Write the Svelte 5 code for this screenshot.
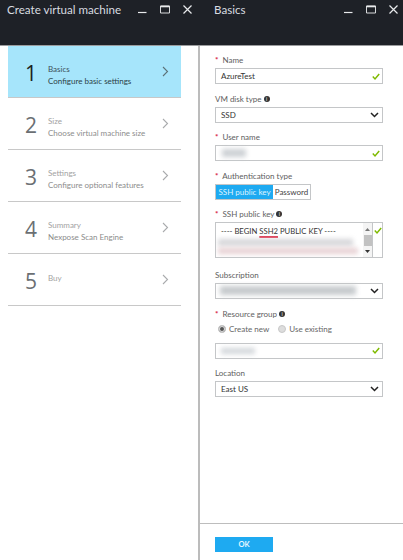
<script>
  const steps = [
    { n: 1, title: 'Basics', sub: 'Configure basic settings', active: true },
    { n: 2, title: 'Size', sub: 'Choose virtual machine size' },
    { n: 3, title: 'Settings', sub: 'Configure optional features' },
    { n: 4, title: 'Summary', sub: 'Nexpose Scan Engine' },
    { n: 5, title: 'Buy', sub: '' }
  ];
</script>

{#snippet winButtons()}
  <div class="winbtns">
    <svg width="9" height="9" viewBox="0 0 9 9"><path d="M0 7.5h8.5" stroke="#e8eaec" stroke-width="1.2" /></svg>
    <svg width="10" height="9" viewBox="0 0 10 9"><path d="M.5 1h9v7H.5z" fill="none" stroke="#d8dadc" stroke-width="1" /><path d="M.5 1.5h9" stroke="#e8eaec" stroke-width="1.6" /></svg>
    <svg width="9" height="9" viewBox="0 0 9 9"><path d="M.5 .5l8 8M8.500 .5l-8 8" stroke="#e8eaec" stroke-width="1.2" /></svg>
  </div>
{/snippet}

{#snippet check()}
  <svg class="check" width="8" height="7" viewBox="0 0 8 7"><path d="M.8 3.6l2.2 2.3L7.2 1" fill="none" stroke="#7fba00" stroke-width="1.5" /></svg>
{/snippet}

{#snippet chevron()}
  <svg class="chev" width="9" height="6" viewBox="0 0 9 6"><path d="M1 1l3.5 3.5L8 1" fill="none" stroke="#222" stroke-width="1.5" /></svg>
{/snippet}

{#snippet info()}
  <span class="info">i</span>
{/snippet}

<div class="app">
  <section class="blade left">
    <header>
      <h1>Create virtual machine</h1>
      {@render winButtons()}
    </header>
    <div class="leftbody">
      <ol class="steps">
        {#each steps as s}
          <li class:active={s.active}>
            <span class="num">{s.n}</span>
            <div class="txt" class:single={!s.sub}>
              <span class="ttl">{s.title}</span>
              {#if s.sub}<span>{s.sub}</span>{/if}
            </div>
            <svg class="arrow" width="7" height="11" viewBox="0 0 7 11"><path d="M1 1l4.500 4.500L1 10" fill="none" stroke="currentColor" stroke-width="1.1" /></svg>
          </li>
        {/each}
      </ol>
    </div>
  </section>

  <section class="blade right">
    <header>
      <h1>Basics</h1>
      {@render winButtons()}
    </header>
    <form class="form">
      <div class="field">
        <div class="label"><b>*</b> Name</div>
        <div class="input"><span>AzureTest</span>{@render check()}</div>
      </div>
      <div class="field">
        <div class="label">VM disk type {@render info()}</div>
        <div class="input"><span>SSD</span>{@render chevron()}</div>
      </div>
      <div class="field">
        <div class="label"><b>*</b> User name</div>
        <div class="input"><i class="blur short"></i>{@render check()}</div>
      </div>
      <div class="field">
        <div class="label"><b>*</b> Authentication type</div>
        <div class="toggle"><span class="on">SSH public key</span><span class="off">Password</span></div>
      </div>
      <div class="field">
        <div class="label"><b>*</b> SSH public key {@render info()}</div>
        <div class="area">
          <div class="areatext">
            <div class="keyline">---- BEGIN <u>SSH2</u> PUBLIC KEY ----</div>
            <i class="blur l1"></i>
            <i class="blur l2"></i>
          </div>
          <div class="scroll">
            <svg width="5" height="3" viewBox="0 0 5 3"><path d="M0 3l2.500-3L5 3z" fill="#777" /></svg>
            <i></i>
            <svg width="5" height="3" viewBox="0 0 5 3"><path d="M0 0l2.500 3L5 0z" fill="#333" /></svg>
          </div>
          <div class="areacheck">{@render check()}</div>
        </div>
      </div>
      <div class="field">
        <div class="label">Subscription</div>
        <div class="input"><i class="blur wide"></i>{@render chevron()}</div>
      </div>
      <div class="field">
        <div class="label"><b>*</b> Resource group {@render info()}</div>
        <div class="radios">
          <span class="radio"><i class="dot sel"></i>Create new</span>
          <span class="radio"><i class="dot"></i>Use existing</span>
        </div>
        <div class="input rg"><i class="blur mid"></i>{@render check()}</div>
      </div>
      <div class="field">
        <div class="label">Location</div>
        <div class="input"><span>East US</span>{@render chevron()}</div>
      </div>
    </form>
    <footer>
      <button type="button">OK</button>
    </footer>
  </section>
</div>

<style>
  :global(body) { margin: 0; background: #fff; }
  .app {
    width: 403px;
    height: 560px;
    display: flex;
    overflow: hidden;
    font-family: Lato, "Open Sans", "Liberation Sans", sans-serif;
    font-size: 8px;
    color: #444;
  }
  .blade { display: flex; flex-direction: column; height: 100%; background: #fff; }
  .left { width: 200px; flex: none; }
  .right { flex: 1; min-width: 0; }
  header {
    height: 46px;
    box-sizing: border-box;
    flex: none;
    background: #1e2127;
    border-bottom: 1px solid #9b9c9e;
    display: flex;
    align-items: flex-start;
    justify-content: space-between;
    padding: 0 8px 0 7px;
    color: #e8eaec;
  }
  .right header { padding-left: 14px; padding-right: 5px; }
  h1 { margin: 0; font-size: 11.6px; font-weight: 400; line-height: 20px; white-space: nowrap; color: #d8dce0; }
  .winbtns { display: flex; gap: 13px; align-items: center; height: 19px; }
  .leftbody { flex: 1; border-right: 2px solid #bcbcbc; }
  .steps { list-style: none; margin: 0 17px 0 8px; padding: 0; }
  .steps li {
    height: 52px;
    box-sizing: border-box;
    border-bottom: 1px solid #c8c8c8;
    display: flex;
    align-items: center;
    color: #8c8c8c;
    padding-left: 17px;
  }
  .steps li.active { background: #a6e5fb; color: #2b3f46; }
  .num { font-family: "Open Sans", sans-serif; font-size: 21px; width: 23px; flex: none; color: #6b6f73; font-weight: 400; margin-top: 3px; }
  .active .num { color: #1b1f22; }
  .txt { flex: 1; display: flex; flex-direction: column; gap: 2px; line-height: 10px; margin-top: 7px; }
  .txt.single { margin-top: -4px; }
  .ttl { color: #a2a2a2; }
  .active .ttl { color: #3d5058; }
  .arrow { margin-right: 12px; color: #a9abad; }
  .active .arrow { color: #5c7278; }
  .form { flex: 1; padding: 8px 20px 0 15px; display: flex; flex-direction: column; gap: 8.6px; }
  .field { display: flex; flex-direction: column; }
  .label { line-height: 12px; height: 14px; color: #5e5e5e; white-space: nowrap; }
  .label b { color: #d6213f; font-weight: 700; margin-right: 2px; }
  .info {
    display: inline-block; width: 6px; height: 6px; border-radius: 50%;
    background: #333; color: #fff; font-size: 5px; line-height: 6px; text-align: center;
    font-style: normal; vertical-align: 1px;
  }
  .input {
    height: 16px;
    box-sizing: border-box;
    border: 1px solid #c4c6c8;
    display: flex;
    align-items: center;
    justify-content: space-between;
    padding: 0 1px 0 5px;
    color: #333;
    background: #fff;
  }
  .check { margin-right: 1px; flex: none; }
  .chev { margin-right: 2px; flex: none; }
  .blur { display: block; background: #c4c8cc; filter: blur(2.5px); }
  .short { width: 24px; height: 8px; margin-left: 1px; background: #ccd0d4; }
  .wide { width: 136px; height: 9px; background: #c6cacd; margin-left: -1px; }
  .mid { width: 34px; height: 6px; background: #d2d6da; }
  .toggle { display: flex; width: 96px; height: 16px; box-sizing: border-box; border: 1px solid #c4c6c8; line-height: 14px; }
  .toggle span { white-space: nowrap; text-align: center; }
  .toggle .on { width: 57px; flex: none; background: #1eaaf1; color: #dff4ff; }
  .toggle .off { flex: 1; color: #444; }
  .area {
    height: 36px;
    margin-bottom: 2px;
    box-sizing: border-box;
    border: 1px solid #c4c6c8;
    display: flex;
    overflow: hidden;
  }
  .areatext { flex: 1; padding: 3px 5px; overflow: hidden; min-width: 0; }
  .keyline { white-space: nowrap; line-height: 10px; color: #333; font-size: 7.7px; }
  .keyline u { text-decoration: underline #e0304a 1.5px; text-underline-offset: 2px; }
  .l1 { width: 135px; height: 7px; margin: 3px 0 0 -3px; background: #d6d6d9; }
  .l2 { width: 140px; height: 6px; margin: 2px 0 0 -3px; background: #e6cfd2; }
  .scroll { width: 9px; flex: none; display: flex; flex-direction: column; align-items: center; justify-content: space-between; padding: 5px 0 4px; box-sizing: border-box; background: #f4f4f4; }
  .scroll i { display: block; width: 8px; height: 11px; background: #c2c2c2; }
  .areacheck { width: 10px; flex: none; border-left: 1px solid #c4c6c8; padding: 3px 0 0 1px; box-sizing: border-box; }
  .radios { display: flex; gap: 9px; padding-left: 3px; height: 15px; align-items: center; }
  .radio { display: flex; align-items: center; gap: 3px; color: #666; white-space: nowrap; }
  .dot { width: 8px; height: 8px; border-radius: 50%; background: #ddd; border: 1px solid #c8c8c8; box-sizing: border-box; }
  .dot.sel { background: #555; box-shadow: 0 0 0 1px #ddd inset; }
  .rg { margin-top: 6px; }
  footer { height: 37px; box-sizing: border-box; flex: none; border-top: 1px solid #bdbdbd; padding: 13px 0 0 15px; }
  footer button {
    display: block; width: 58px; height: 15px; border: 0; padding: 0;
    background: #1eaaf1; color: #e8f7ff; font: 700 7.5px Lato, "Open Sans", sans-serif;
  }
</style>
